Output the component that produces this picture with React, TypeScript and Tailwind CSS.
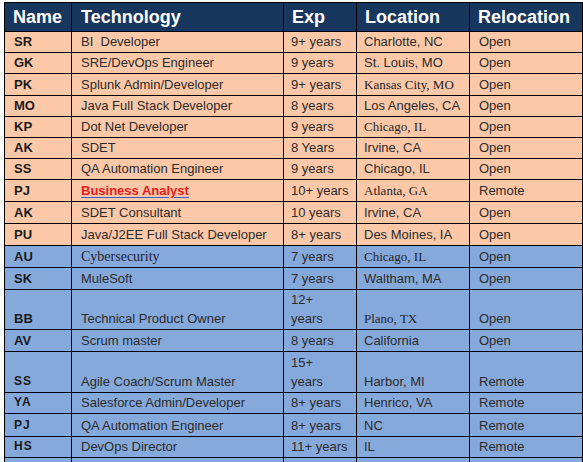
type Row = {
  name: string;
  tech: string;
  exp: string;
  loc: string;
  reloc: string;
  h: number;
  blue?: boolean;
  locSerif?: boolean;
  techSerif?: boolean;
  link?: boolean;
  wide?: boolean;
  wrap?: boolean;
};

const ROWS: Row[] = [
  { name: "SR", tech: "BI\u00a0 Developer", exp: "9+ years", loc: "Charlotte, NC", reloc: "Open", h: 21 },
  { name: "GK", tech: "SRE/DevOps Engineer", exp: "9 years", loc: "St. Louis, MO", reloc: "Open", h: 21 },
  { name: "PK", tech: "Splunk Admin/Developer", exp: "9+ years", loc: "Kansas City, MO", reloc: "Open", h: 22, locSerif: true },
  { name: "MO", tech: "Java Full Stack Developer", exp: "8 years", loc: "Los Angeles, CA", reloc: "Open", h: 21 },
  { name: "KP", tech: "Dot Net Developer", exp: "9 years", loc: "Chicago, IL", reloc: "Open", h: 21, locSerif: true },
  { name: "AK", tech: "SDET", exp: "8 Years", loc: "Irvine, CA", reloc: "Open", h: 21 },
  { name: "SS", tech: "QA Automation Engineer", exp: "9 years", loc: "Chicago, IL", reloc: "Open", h: 21 },
  { name: "PJ", tech: "Business Analyst", exp: "10+ years", loc: "Atlanta, GA", reloc: "Remote", h: 22, link: true, locSerif: true },
  { name: "AK", tech: "SDET Consultant", exp: "10 years", loc: "Irvine, CA", reloc: "Open", h: 22 },
  { name: "PU", tech: "Java/J2EE Full Stack Developer", exp: "8+ years", loc: "Des Moines, IA", reloc: "Open", h: 22 },
  { name: "AU", tech: "Cybersecurity", exp: "7 years", loc: "Chicago, IL", reloc: "Open", h: 22, blue: true, techSerif: true, locSerif: true },
  { name: "SK", tech: "MuleSoft", exp: "7 years", loc: "Waltham, MA", reloc: "Open", h: 22, blue: true },
  { name: "BB", tech: "Technical Product Owner", exp: "12+ years", loc: "Plano, TX", reloc: "Open", h: 40, blue: true, locSerif: true, wrap: true },
  { name: "AV", tech: "Scrum master", exp: "8 years", loc: "California", reloc: "Open", h: 22, blue: true },
  { name: "SS", tech: "Agile Coach/Scrum Master", exp: "15+ years", loc: "Harbor, MI", reloc: "Remote", h: 41, blue: true, wide: true, wrap: true },
  { name: "YA", tech: "Salesforce Admin/Developer", exp: "8+ years", loc: "Henrico, VA", reloc: "Remote", h: 21, blue: true, wide: true },
  { name: "PJ", tech: "QA Automation Engineer", exp: "8+ years", loc: "NC", reloc: "Remote", h: 23, blue: true, wide: true },
  { name: "HS", tech: "DevOps Director", exp: "11+ years", loc: "IL", reloc: "Remote", h: 21, blue: true, wide: true },
  { name: "", tech: "", exp: "", loc: "", reloc: "", h: 21, blue: true },
];

const arial = "font-['Liberation_Sans',Arial,sans-serif]";
const serif = "font-['Liberation_Serif','Times_New_Roman',serif]";

export default function App() {
  return (
    <div className="min-h-screen w-[583px] h-[462px] overflow-hidden bg-white pt-[2px] pl-[4px]">
      <table className={`table-fixed border-collapse w-[578px] ${arial} text-[13px] leading-[19px] text-[#2b2b2b]`}>
        <colgroup>
          <col className="w-[67px]" />
          <col className="w-[212px]" />
          <col className="w-[73px]" />
          <col className="w-[113px]" />
          <col className="w-[113px]" />
        </colgroup>
        <thead>
          <tr className="h-[29px] bg-[#17375e] text-white text-[18px] font-bold leading-[20px]">
            <th className="border border-black text-left pl-[8px]">Name</th>
            <th className="border border-black text-left pl-[9px]">Technology</th>
            <th className="border border-black text-left pl-[8px]">Exp</th>
            <th className="border border-black text-left pl-[8px]">Location</th>
            <th className="border border-black text-left pl-[8px]">Relocation</th>
          </tr>
        </thead>
        <tbody>
          {ROWS.map((r, i) => {
            const [expNum, ...expRest] = r.exp.split(" ");
            return (
              <tr
                key={i}
                className={r.blue ? "bg-[#86a9dc]" : "bg-[#fdc8a8]"}
                style={{ height: r.h }}
              >
                <td
                  className={`border border-black align-bottom pl-[9px] pb-[1px] font-bold text-[#1a1a1a] ${
                    r.wide ? "tracking-[1px] text-[12px]" : ""
                  }`}
                >
                  {r.name}
                </td>
                <td
                  className={`border border-black align-bottom pl-[9px] pb-[1px] ${
                    r.techSerif ? `${serif} text-[14px] text-[#1e2433]` : ""
                  }`}
                >
                  {r.link ? (
                    <span className="font-bold text-[#e81c1c] underline decoration-[#3b5fc9] underline-offset-2">
                      {r.tech}
                    </span>
                  ) : (
                    r.tech
                  )}
                </td>
                <td className="border border-black align-bottom pl-[7px] pr-[2px] pb-[1px]">
                  {r.wrap ? (
                    <>
                      {expNum}
                      <br />
                      {expRest.join(" ")}
                    </>
                  ) : (
                    r.exp
                  )}
                </td>
                <td
                  className={`border border-black align-bottom pl-[7px] pb-[1px] ${
                    r.locSerif ? `${serif} text-[13px] text-[#1e1e1e]` : ""
                  }`}
                >
                  {r.loc}
                </td>
                <td className="border border-black align-bottom pl-[9px] pb-[1px]">{r.reloc}</td>
              </tr>
            );
          })}
        </tbody>
      </table>
    </div>
  );
}
